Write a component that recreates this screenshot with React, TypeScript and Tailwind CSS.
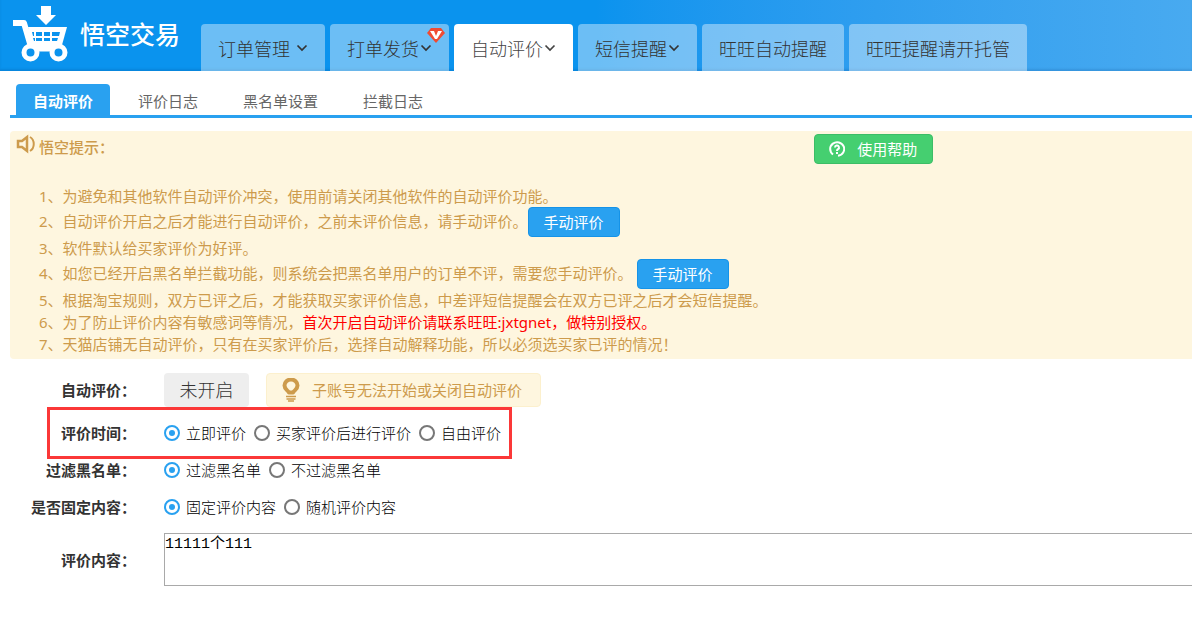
import React, { useState } from 'react';

const navItems = [
  { label: '订单管理', menu: true, spaced: true },
  { label: '打单发货', menu: true, badge: true },
  { label: '自动评价', menu: true, active: true },
  { label: '短信提醒', menu: true },
  { label: '旺旺自动提醒' },
  { label: '旺旺提醒请开托管' },
];

const subTabs = ['自动评价', '评价日志', '黑名单设置', '拦截日志'];

const Logo = () => (
  <a href="#" className="flex w-[201px] shrink-0 items-start pl-3 pt-1.5">
    <svg viewBox="0 0 56 56" className="h-14 w-14" fill="none" aria-hidden="true">
      <path d="M29 0h10v9h5L34 19 24 9h5z" fill="#fff" />
      <path d="M1 17h11l7 24" stroke="#fff" strokeWidth="6" strokeLinejoin="round" />
      <path d="M16 21h39l-5 18-3 5H20z" fill="#fff" />
      <path
        d="M20 26h2v4h-1zM24 26h6v4h-6zM32 26h6v4h-6zM40 26h8l-1 4h-7zM21 32h2v3h-1zM24 32h6v3h-6zM32 32h6v3h-6zM40 32h6l-1 3h-5z"
        fill="#0a93ee"
      />
      <path d="M20 42h26" stroke="#fff" strokeWidth="7" />
      <circle cx="18.500" cy="46.500" r="6.500" fill="#0a93ee" stroke="#fff" strokeWidth="5" />
      <circle cx="46.500" cy="46.500" r="6.500" fill="#0a93ee" stroke="#fff" strokeWidth="5" />
    </svg>
    <span className="ml-3 mt-2.5 text-[25px] font-medium leading-9 text-white">悟空交易</span>
  </a>
);

const Chevron = () => (
  <svg viewBox="0 0 13 12" className="h-3 w-[13px]" fill="none" stroke="currentColor" strokeWidth="1.7" aria-hidden="true">
    <path d="M2.500 2.500l4.500 4.500 4.500-4.500" />
  </svg>
);

const Badge = () => (
  <svg viewBox="0 0 18 16" className="absolute right-1 top-1 h-4 w-[18px]" aria-hidden="true">
    <path d="M4 0h10l4 5-9 10L0 5z" fill="#f04b32" />
    <path d="M3 3h4l2 5 2-5h4l-5 8H8z" fill="#fff" />
  </svg>
);

const ManualButton = () => (
  <button
    type="button"
    className="h-[30px] w-[92px] rounded-sm border border-[#1593e8] bg-[#29a1f0] text-[15px] text-white"
  >
    手动评价
  </button>
);

type RadioRowProps = {
  name: string;
  label: string;
  options: string[];
  className: string;
  marked?: boolean;
};

const RadioRow = ({ name, label, options, className, marked }: RadioRowProps) => {
  const [value, setValue] = useState(options[0]);
  return (
    <div role="radiogroup" aria-labelledby={`${name}-label`} className={`relative flex items-center ${className}`}>
      {marked && (
        <div className="pointer-events-none absolute inset-y-0 left-[47px] w-[465px] border-3 border-[#fb3838]" />
      )}
      <span id={`${name}-label`} className="w-[136px] text-right font-bold">
        {label}：
      </span>
      <div className="ml-7 flex items-center gap-[9px]">
        {options.map((option) => (
          <label key={option} className="flex items-center gap-1.5 font-light text-black">
            <input
              type="radio"
              name={name}
              checked={value === option}
              onChange={() => setValue(option)}
              className="flex h-4 w-4 appearance-none items-center justify-center rounded-full border-2 border-[#777] before:h-1.5 before:w-1.5 before:rounded-full checked:border-[#29a1f0] checked:before:bg-[#29a1f0]"
            />
            <span className="-mr-px">{option}</span>
          </label>
        ))}
      </div>
    </div>
  );
};

export default function App() {
  return (
    <div className="min-h-screen overflow-x-hidden bg-white font-['Noto_Sans','Noto_Sans_CJK_SC',sans-serif] text-[15px] leading-[22px] text-[#333]">
      <header className="flex h-[71px] bg-linear-to-r from-[#0a93ee] from-50% to-[#48aaf0] shadow-[inset_0_-2px_2px_rgba(0,60,120,0.15)]">
        <Logo />
        <nav className="flex items-end gap-[5px]">
          {navItems.map((item) => (
            <a
              key={item.label}
              href="#"
              className={`relative flex h-[47px] items-center whitespace-nowrap rounded-t-sm px-[17px] pt-0.5 text-lg font-light ${
                item.active ? 'bg-white text-[#444]' : 'bg-white/40'
              } ${item.spaced ? 'gap-[5px]' : ''}`}
            >
              {item.label}
              {item.menu && <Chevron />}
              {item.badge && <Badge />}
            </a>
          ))}
        </nav>
      </header>

      {/* Sub navigation */}
      <nav className="ml-2.5 mt-[13px] flex gap-[11px] border-b-3 border-[#29a1f0] pl-1.5">
        {subTabs.map((tab, i) => (
          <a
            key={tab}
            href="#"
            className={`flex h-[31px] items-center rounded-t px-[17px] pt-0.5 ${
              i === 0 ? 'bg-[#29a1f0] font-bold text-white' : 'text-[#666]'
            }`}
          >
            {tab}
          </a>
        ))}
      </nav>

      {/* Tips */}
      <section className="ml-2.5 mt-[13px] rounded-l-sm bg-[#fef6df] pb-1 text-[#cd9b4c]">
        <div className="flex h-[54px] items-start pt-[3px]">
          <div className="flex w-[68%] items-start gap-[3px] pl-1.5">
            <svg viewBox="0 0 20 20" className="h-5 w-5" fill="none" stroke="currentColor" aria-hidden="true">
              <path d="M2 7h4l5-4v14l-5-4H2z" strokeWidth="2.500" />
              <path d="M14 3c5 3 5 11 0 14" strokeWidth="2" />
            </svg>
            <h2 className="pt-0.5 font-medium">悟空提示：</h2>
          </div>
          <button
            type="button"
            className="flex h-[30px] w-[119px] items-center justify-center gap-3 rounded-sm border border-[#3cbd66] bg-[#45cf70] text-white"
          >
            <svg viewBox="0 0 16 16" className="h-4 w-4" fill="none" stroke="currentColor" strokeWidth="2" aria-hidden="true">
              <path d="M4 13.500a7 6.800 0 1 1 5 1.300" />
              <path d="M6 6.500a2 2 0 1 1 3 1.700q-1 .6-1 1.800M8 11v2" />
            </svg>
            使用帮助
          </button>
        </div>
        <div className="whitespace-nowrap pl-[29px]">
          <p>1、为避免和其他软件自动评价冲突，使用前请关闭其他软件的自动评价功能。</p>
          <div className="flex h-[30px] items-center">
            <span className="pb-0.5">2、自动评价开启之后才能进行自动评价，之前未评价信息，请手动评价。</span>
            <ManualButton />
          </div>
          <p>3、软件默认给买家评价为好评。</p>
          <div className="flex h-[30px] items-center gap-1">
            <span className="pb-0.5">4、如您已经开启黑名单拦截功能，则系统会把黑名单用户的订单不评，需要您手动评价。</span>
            <ManualButton />
          </div>
          <p>5、根据淘宝规则，双方已评之后，才能获取买家评价信息，中差评短信提醒会在双方已评之后才会短信提醒。</p>
          <p>
            6、为了防止评价内容有敏感词等情况，
            <span className="text-[#ff0000]">首次开启自动评价请联系旺旺:jxtgnet，做特别授权。</span>
          </p>
          <p>7、天猫店铺无自动评价，只有在买家评价后，选择自动解释功能，所以必须选买家已评的情况！</p>
        </div>
      </section>

      {/* Settings */}
      <form className="pt-3.5">
        <div className="flex h-[34px] items-center">
          <span className="w-[136px] text-right font-bold">自动评价：</span>
          <button type="button" className="ml-7 h-[34px] w-[85px] rounded-sm bg-[#eee] text-lg font-light">
            未开启
          </button>
          <div className="ml-[17px] flex h-[34px] items-center gap-[11px] rounded-sm border border-[#fcf0cd] bg-[#fef6df] pl-3.5 pr-[18px] text-[#cd9b4c]">
            <svg viewBox="0 0 20 24" className="h-6 w-5" fill="none" stroke="currentColor" aria-hidden="true">
              <path d="M8 14.500C7 12.500 3.500 11.500 3.500 7.500a6.500 6 0 0 1 13 0c0 4-3.500 5-4.500 7z" strokeWidth="4" strokeLinejoin="round" />
              <path d="M5 18.500h10M5.500 21h9M7 23h6" strokeWidth="1.500" />
            </svg>
            子账号无法开始或关闭自动评价
          </div>
        </div>
        <RadioRow
          name="time"
          label="评价时间"
          options={['立即评价', '买家评价后进行评价', '自由评价']}
          className="h-[52px]"
          marked
        />
        <RadioRow name="blacklist" label="过滤黑名单" options={['过滤黑名单', '不过滤黑名单']} className="h-[22px]" />
        <RadioRow
          name="fixed"
          label="是否固定内容"
          options={['固定评价内容', '随机评价内容']}
          className="mt-[15px] h-[22px]"
        />
        <div className="mt-[15px] flex items-center">
          <label htmlFor="content" className="w-[136px] shrink-0 text-right font-bold">
            评价内容：
          </label>
          <textarea
            id="content"
            defaultValue="11111个111"
            className="ml-7 h-[53px] min-w-0 flex-1 resize-none border border-r-0 border-[#a9a9a9] font-['Liberation_Mono','Noto_Sans_CJK_SC',monospace] text-[15px] leading-[22px] text-black"
          />
        </div>
      </form>
    </div>
  );
}
